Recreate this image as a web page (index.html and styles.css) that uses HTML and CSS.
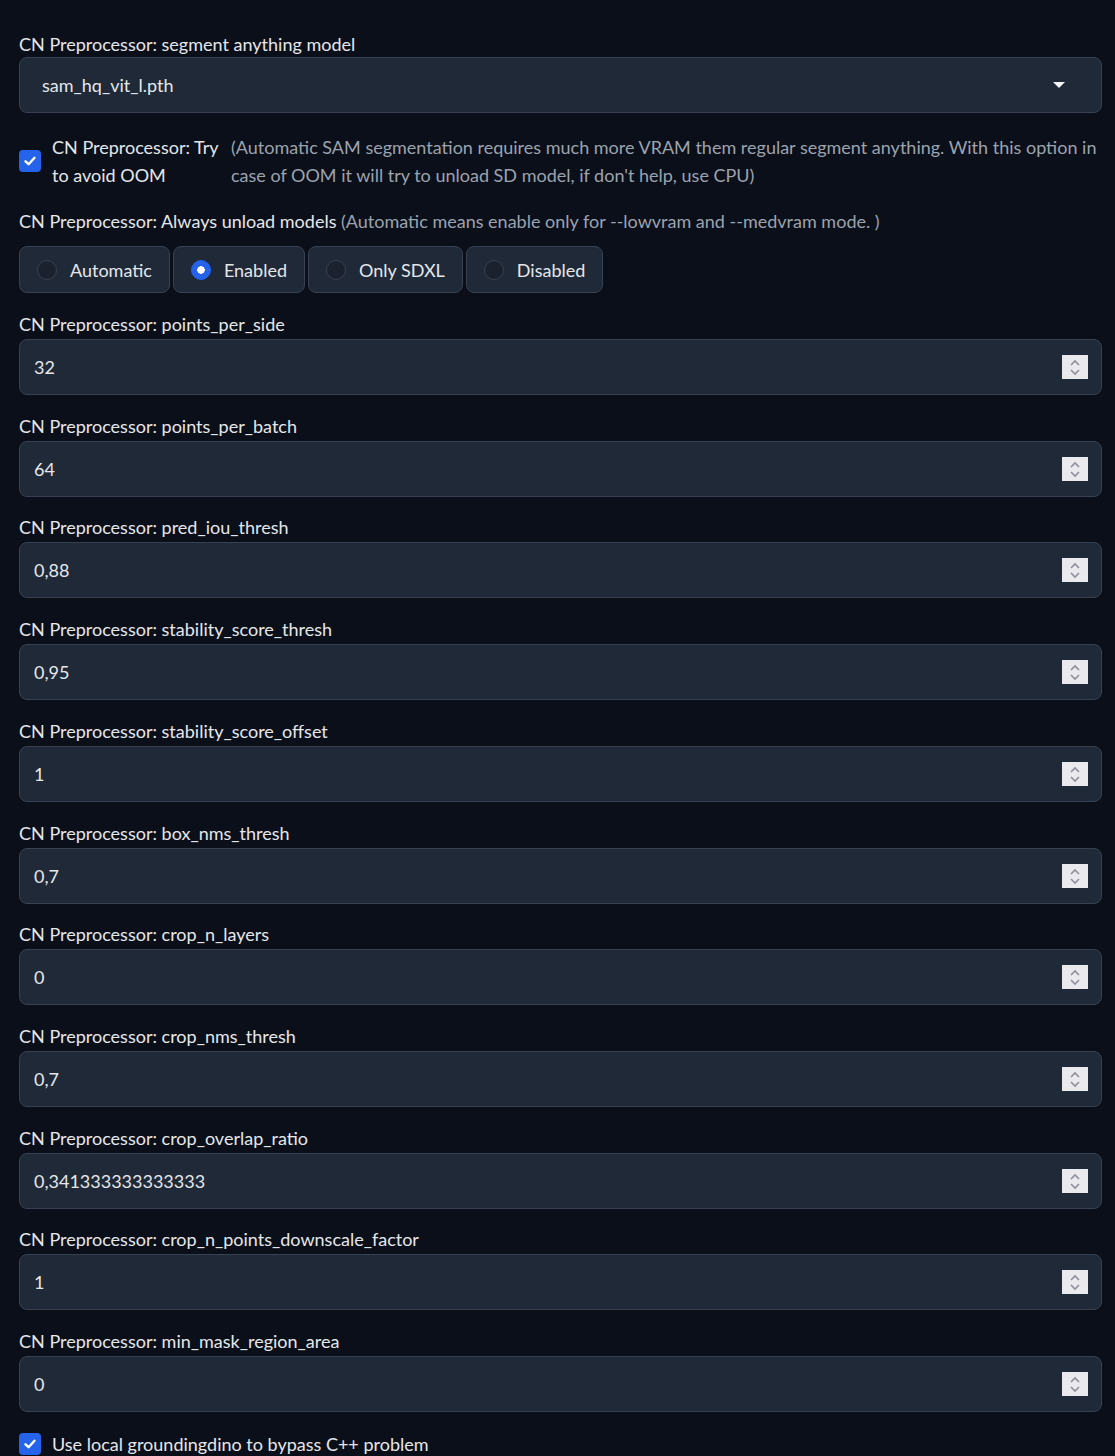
FILE: index.html
```html
<!DOCTYPE html>
<html>
<head>
<meta charset="utf-8">
<link rel="stylesheet" href="styles.css">
</head>
<body>
<div class="page">
  <div class="field">
    <div class="label dd-label">CN Preprocessor: segment anything model</div>
    <div class="dropdown">
      <span class="value">sam_hq_vit_l.pth</span>
      <svg class="caret" width="12" height="6" viewBox="0 0 12 6"><path d="M0 0 L12 0 L6 6 Z" fill="#f3f4f6"/></svg>
    </div>
  </div>

  <div class="check-row">
    <span class="checkbox"><svg width="14" height="14" viewBox="0 0 14 14"><path d="M2.5 7.3 L5.6 10.2 L11.5 3.8" fill="none" stroke="#fff" stroke-width="2.4" stroke-linecap="round" stroke-linejoin="round"/></svg></span>
    <span class="check-label narrow">CN Preprocessor: Try to avoid OOM</span>
    <span class="info">(Automatic SAM segmentation requires much more VRAM them regular segment anything. With this option in case of OOM it will try to unload SD model, if don't help, use CPU)</span>
  </div>

  <div class="field">
    <div class="label radio-label">CN Preprocessor: Always unload models <span class="info-inline">(Automatic means enable only for --lowvram and --medvram mode. )</span></div>
    <div class="radios">
      <div class="radio"><span class="dot"></span>Automatic</div>
      <div class="radio"><span class="dot on"></span>Enabled</div>
      <div class="radio"><span class="dot"></span>Only SDXL</div>
      <div class="radio"><span class="dot"></span>Disabled</div>
    </div>
  </div>

  <div class="field">
    <div class="label">CN Preprocessor: points_per_side</div>
    <div class="num"><span class="value">32</span><svg class="spin" width="26" height="24" viewBox="0 0 26 24"><rect width="26" height="24" fill="#e9e9ee"/><path d="M9 10 L13 6 L17 10 M9 15 L13 19 L17 15" fill="none" stroke="#8f8f9a" stroke-width="1.6"/></svg></div>
  </div>
  <div class="field">
    <div class="label">CN Preprocessor: points_per_batch</div>
    <div class="num"><span class="value">64</span><svg class="spin" width="26" height="24" viewBox="0 0 26 24"><rect width="26" height="24" fill="#e9e9ee"/><path d="M9 10 L13 6 L17 10 M9 15 L13 19 L17 15" fill="none" stroke="#8f8f9a" stroke-width="1.6"/></svg></div>
  </div>
  <div class="field">
    <div class="label">CN Preprocessor: pred_iou_thresh</div>
    <div class="num"><span class="value">0,88</span><svg class="spin" width="26" height="24" viewBox="0 0 26 24"><rect width="26" height="24" fill="#e9e9ee"/><path d="M9 10 L13 6 L17 10 M9 15 L13 19 L17 15" fill="none" stroke="#8f8f9a" stroke-width="1.6"/></svg></div>
  </div>
  <div class="field">
    <div class="label">CN Preprocessor: stability_score_thresh</div>
    <div class="num"><span class="value">0,95</span><svg class="spin" width="26" height="24" viewBox="0 0 26 24"><rect width="26" height="24" fill="#e9e9ee"/><path d="M9 10 L13 6 L17 10 M9 15 L13 19 L17 15" fill="none" stroke="#8f8f9a" stroke-width="1.6"/></svg></div>
  </div>
  <div class="field">
    <div class="label">CN Preprocessor: stability_score_offset</div>
    <div class="num"><span class="value">1</span><svg class="spin" width="26" height="24" viewBox="0 0 26 24"><rect width="26" height="24" fill="#e9e9ee"/><path d="M9 10 L13 6 L17 10 M9 15 L13 19 L17 15" fill="none" stroke="#8f8f9a" stroke-width="1.6"/></svg></div>
  </div>
  <div class="field">
    <div class="label">CN Preprocessor: box_nms_thresh</div>
    <div class="num"><span class="value">0,7</span><svg class="spin" width="26" height="24" viewBox="0 0 26 24"><rect width="26" height="24" fill="#e9e9ee"/><path d="M9 10 L13 6 L17 10 M9 15 L13 19 L17 15" fill="none" stroke="#8f8f9a" stroke-width="1.6"/></svg></div>
  </div>
  <div class="field">
    <div class="label">CN Preprocessor: crop_n_layers</div>
    <div class="num"><span class="value">0</span><svg class="spin" width="26" height="24" viewBox="0 0 26 24"><rect width="26" height="24" fill="#e9e9ee"/><path d="M9 10 L13 6 L17 10 M9 15 L13 19 L17 15" fill="none" stroke="#8f8f9a" stroke-width="1.6"/></svg></div>
  </div>
  <div class="field">
    <div class="label">CN Preprocessor: crop_nms_thresh</div>
    <div class="num"><span class="value">0,7</span><svg class="spin" width="26" height="24" viewBox="0 0 26 24"><rect width="26" height="24" fill="#e9e9ee"/><path d="M9 10 L13 6 L17 10 M9 15 L13 19 L17 15" fill="none" stroke="#8f8f9a" stroke-width="1.6"/></svg></div>
  </div>
  <div class="field">
    <div class="label">CN Preprocessor: crop_overlap_ratio</div>
    <div class="num"><span class="value">0,341333333333333</span><svg class="spin" width="26" height="24" viewBox="0 0 26 24"><rect width="26" height="24" fill="#e9e9ee"/><path d="M9 10 L13 6 L17 10 M9 15 L13 19 L17 15" fill="none" stroke="#8f8f9a" stroke-width="1.6"/></svg></div>
  </div>
  <div class="field">
    <div class="label">CN Preprocessor: crop_n_points_downscale_factor</div>
    <div class="num"><span class="value">1</span><svg class="spin" width="26" height="24" viewBox="0 0 26 24"><rect width="26" height="24" fill="#e9e9ee"/><path d="M9 10 L13 6 L17 10 M9 15 L13 19 L17 15" fill="none" stroke="#8f8f9a" stroke-width="1.6"/></svg></div>
  </div>
  <div class="field">
    <div class="label">CN Preprocessor: min_mask_region_area</div>
    <div class="num"><span class="value">0</span><svg class="spin" width="26" height="24" viewBox="0 0 26 24"><rect width="26" height="24" fill="#e9e9ee"/><path d="M9 10 L13 6 L17 10 M9 15 L13 19 L17 15" fill="none" stroke="#8f8f9a" stroke-width="1.6"/></svg></div>
  </div>

  <div class="check-row last">
    <span class="checkbox"><svg width="14" height="14" viewBox="0 0 14 14"><path d="M2.5 7.3 L5.6 10.2 L11.5 3.8" fill="none" stroke="#fff" stroke-width="2.4" stroke-linecap="round" stroke-linejoin="round"/></svg></span>
    <span class="check-label">Use local groundingdino to bypass C++ problem</span>
  </div>
</div>
</body>
</html>
```

FILE: styles.css
```css
html, body {
  margin: 0;
  padding: 0;
  background: #0b0f19;
}
body {
  font-family: Lato, "Noto Sans", sans-serif;
  color: #e5e7eb;
  font-size: 18px;
}
.page {
  padding: 33px 13px 0 19px;
  display: flex;
  flex-direction: column;
  gap: 19.7px;
}
.field {
  display: flex;
  flex-direction: column;
}
.label {
  line-height: 22px;
  margin-bottom: 4px;
  color: #e5e7eb;
}
.dd-label { margin-bottom: 2px; }
.radio-label { margin-bottom: 14px; margin-top: 2px; }
.info-inline, .info {
  color: #9ca3af;
}
.dropdown, .num {
  height: 54px;
  background: #1f2937;
  border: 1px solid #374151;
  border-radius: 8px;
  display: flex;
  align-items: center;
  justify-content: space-between;
}
.dropdown {
  padding: 0 36px 0 22px;
}
.num {
  padding: 0 13px 0 14px;
}
.value {
  color: #e5e7eb;
}
.check-row {
  display: flex;
  align-items: center;
  line-height: 28px;
}
.checkbox {
  width: 22px;
  height: 22px;
  background: #2563eb;
  border-radius: 4px;
  display: flex;
  align-items: center;
  justify-content: center;
  flex: none;
  margin-right: 11px;
}
.check-label {
  color: #e5e7eb;
}
.check-label.narrow {
  width: 170px;
  flex: none;
  margin-right: 9px;
}
.info {
  flex: 1;
}
.radios {
  display: flex;
  gap: 3px;
}
.radio {
  height: 45px;
  border: 1px solid #374151;
  border-radius: 8px;
  background: #1f2937;
  display: flex;
  align-items: center;
  padding: 0 17px;
  white-space: nowrap;
}
.dot {
  width: 20px;
  height: 20px;
  border-radius: 50%;
  border: 1px solid #374151;
  background: #1a2230;
  box-sizing: border-box;
  margin-right: 13px;
  flex: none;
}
.dot.on {
  background: #2563eb radial-gradient(circle, #fff 0 3.5px, transparent 4px);
  border-color: #2563eb;
}
.last {
  margin-top: -2px;
}
```
